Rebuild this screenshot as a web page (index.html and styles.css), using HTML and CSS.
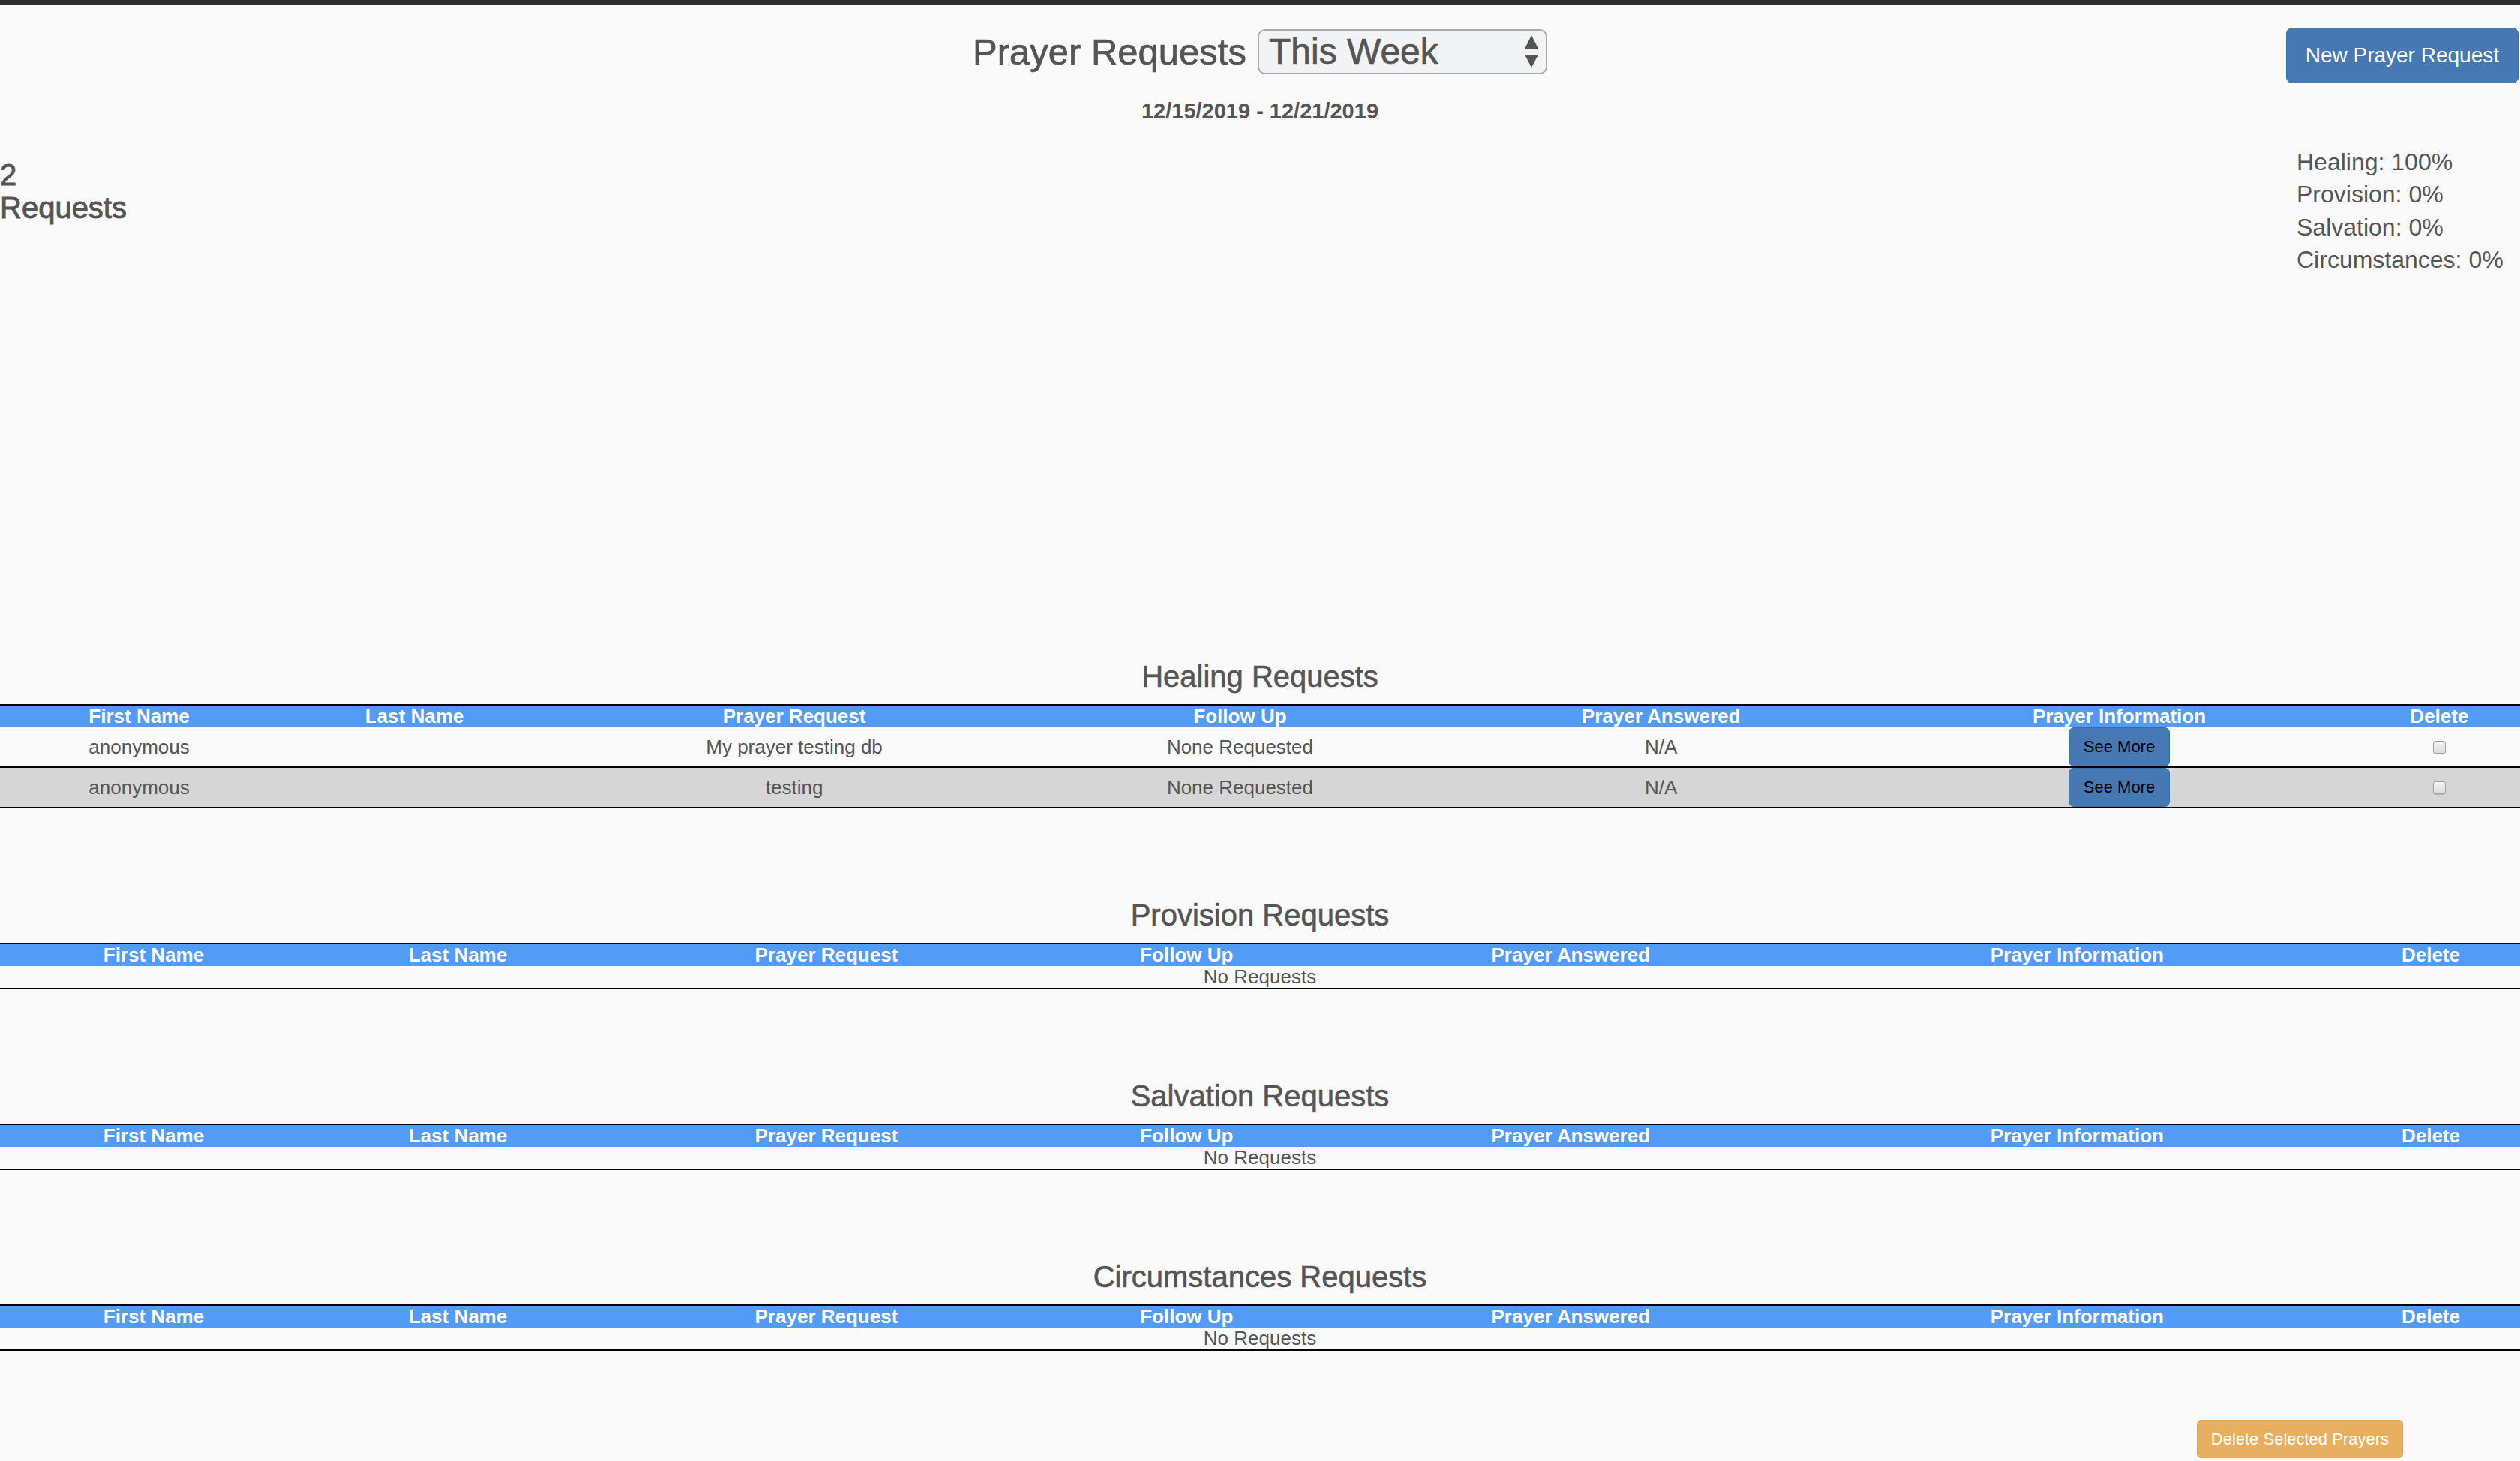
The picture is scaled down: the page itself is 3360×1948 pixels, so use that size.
FILE: index.html
```html
<!DOCTYPE html>
<html lang="en">
<head>
<meta charset="utf-8">
<title>Prayer Requests</title>
<link rel="stylesheet" href="styles.css">
</head>
<body>
<div class="topbar"></div>
<header class="page-head">
  <div class="head-left"></div>
  <div class="head-center">
    <div class="title-row">
      <h2 class="page-title">Prayer Requests</h2>
      <div class="select">
        <span class="select-text">This Week</span>
        <svg class="select-arrows" width="20" height="44" viewBox="0 0 20 44"><path d="M10 0 L19 18 L1 18 Z" fill="#555"/><path d="M1 26 L19 26 L10 43 Z" fill="#555"/></svg>
      </div>
    </div>
    <h5 class="date-range">12/15/2019 - 12/21/2019</h5>
  </div>
  <div class="head-right">
    <button class="btn btn-primary btn-new">New Prayer Request</button>
  </div>
</header>

<section class="summary">
  <h3 class="count">2<br>Requests</h3>
  <ul class="stats">
    <li>Healing: 100%</li>
    <li>Provision: 0%</li>
    <li>Salvation: 0%</li>
    <li>Circumstances: 0%</li>
  </ul>
</section>

<main class="lists">
  <section class="req-section">
    <h3 class="section-title">Healing Requests</h3>
    <table class="req-table">
      <thead>
        <tr><th>First Name</th><th>Last Name</th><th>Prayer Request</th><th>Follow Up</th><th>Prayer Answered</th><th>Prayer Information</th><th>Delete</th></tr>
      </thead>
      <tbody>
        <tr><td>anonymous</td><td></td><td>My prayer testing db</td><td>None Requested</td><td>N/A</td><td><button class="btn btn-more">See More</button></td><td><input type="checkbox" class="chk"></td></tr>
        <tr class="alt"><td>anonymous</td><td></td><td>testing</td><td>None Requested</td><td>N/A</td><td><button class="btn btn-more">See More</button></td><td><input type="checkbox" class="chk"></td></tr>
      </tbody>
    </table>
  </section>

  <section class="req-section">
    <h3 class="section-title">Provision Requests</h3>
    <table class="req-table">
      <thead>
        <tr><th>First Name</th><th>Last Name</th><th>Prayer Request</th><th>Follow Up</th><th>Prayer Answered</th><th>Prayer Information</th><th>Delete</th></tr>
      </thead>
      <tbody>
        <tr><td colspan="7">No Requests</td></tr>
      </tbody>
    </table>
  </section>

  <section class="req-section">
    <h3 class="section-title">Salvation Requests</h3>
    <table class="req-table">
      <thead>
        <tr><th>First Name</th><th>Last Name</th><th>Prayer Request</th><th>Follow Up</th><th>Prayer Answered</th><th>Prayer Information</th><th>Delete</th></tr>
      </thead>
      <tbody>
        <tr><td colspan="7">No Requests</td></tr>
      </tbody>
    </table>
  </section>

  <section class="req-section">
    <h3 class="section-title">Circumstances Requests</h3>
    <table class="req-table">
      <thead>
        <tr><th>First Name</th><th>Last Name</th><th>Prayer Request</th><th>Follow Up</th><th>Prayer Answered</th><th>Prayer Information</th><th>Delete</th></tr>
      </thead>
      <tbody>
        <tr><td colspan="7">No Requests</td></tr>
      </tbody>
    </table>
  </section>
</main>

<div class="actions">
  <button class="btn btn-warning">Delete Selected Prayers</button>
</div>
</body>
</html>
```

FILE: styles.css
```css
* { box-sizing: border-box; }

html, body {
  margin: 0;
  padding: 0;
  background: #fafafa;
}

body {
  font-family: "Liberation Sans", Arial, Helvetica, sans-serif;
  color: #555;
  font-size: 26px;
}

.topbar {
  height: 6px;
  background: #2c2d2f;
}

.page-head {
  display: grid;
  grid-template-columns: 1fr auto 1fr;
  align-items: start;
  margin-top: 33px;
}

.head-center {
  display: flex;
  flex-direction: column;
  align-items: center;
}

.title-row {
  display: flex;
  align-items: center;
  gap: 15px;
  height: 60px;
}

.page-title {
  margin: 0;
  font-size: 49px;
  font-weight: 400;
  line-height: 54px;
  -webkit-text-stroke: 0.7px #555;
}

.select {
  display: flex;
  align-items: center;
  justify-content: space-between;
  width: 386px;
  height: 60px;
  padding: 0 9px 0 13px;
  border: 2px solid #a9a9a9;
  border-radius: 10px;
  background: #f2f3f5;
}

.select-text {
  font-size: 48px;
  line-height: 56px;
  -webkit-text-stroke: 0.7px #555;
}

.select-arrows {
  display: block;
}

.date-range {
  margin: 33px 0 0;
  font-size: 29px;
  font-weight: 700;
  line-height: 32px;
}

.head-right {
  display: flex;
  justify-content: flex-end;
  margin-top: -2px;
  padding-right: 2px;
}

.btn {
  font-family: "Liberation Sans", Arial, Helvetica, sans-serif;
  border-radius: 8px;
  cursor: pointer;
}

.btn-new {
  font-size: 28px;
  line-height: 40px;
  padding: 16px 25px 16px;
  color: #fff;
  background: #4679b4;
  border: 1px solid #3f6fa8;
}

.summary {
  display: flex;
  justify-content: space-between;
  align-items: flex-start;
  margin-top: 31px;
  min-height: 565px;
}

.count {
  margin: 16px 0 0;
  font-size: 40px;
  font-weight: 400;
  line-height: 44px;
  -webkit-text-stroke: 0.9px #555;
}

.stats {
  list-style: none;
  margin: 0;
  padding: 0;
  width: 298px;
  font-size: 32px;
  line-height: 43.3px;
}

.req-section {
  margin-top: 120px;
}

.section-title {
  margin: 0 0 15px;
  text-align: center;
  font-size: 40px;
  font-weight: 400;
  line-height: 44px;
  -webkit-text-stroke: 0.6px #555;
}

.req-table {
  width: 100%;
  border-collapse: collapse;
  border-spacing: 0;
}

.req-table thead tr {
  background: #529bf7;
  border-top: 2px solid #000;
}

.req-table th {
  padding: 0;
  color: #fff;
  font-size: 26px;
  font-weight: 700;
  line-height: 29px;
  text-align: center;
}

.req-table tbody tr {
  border-bottom: 2px solid #000;
}

.req-table tbody tr.alt {
  background: #d6d6d6;
}

.req-table td {
  padding: 0;
  font-size: 26px;
  line-height: 29px;
  text-align: center;
  vertical-align: middle;
}

.btn-more {
  display: block;
  margin: 0 auto;
  font-size: 22px;
  line-height: 34px;
  padding: 8px 19px;
  color: #000;
  background: #4679b3;
  border: 1px solid #3d6da5;
  border-radius: 7px;
}

.chk {
  appearance: none;
  -webkit-appearance: none;
  display: block;
  margin: 0 auto;
  width: 17px;
  height: 17px;
  border: 1px solid #a3a3a3;
  border-radius: 3px;
  background: linear-gradient(#f4f4f4, #dcdcdc);
  box-shadow: 0 1px 1px rgba(0, 0, 0, 0.15);
}

.actions {
  display: flex;
  justify-content: flex-end;
  margin-top: 92px;
  padding-right: 156px;
}

.btn-warning {
  font-size: 22px;
  line-height: 33px;
  padding: 8px 18px;
  color: #fff;
  background: #e8af60;
  border: 1px solid #e2a34d;
  border-radius: 6px;
}
```
